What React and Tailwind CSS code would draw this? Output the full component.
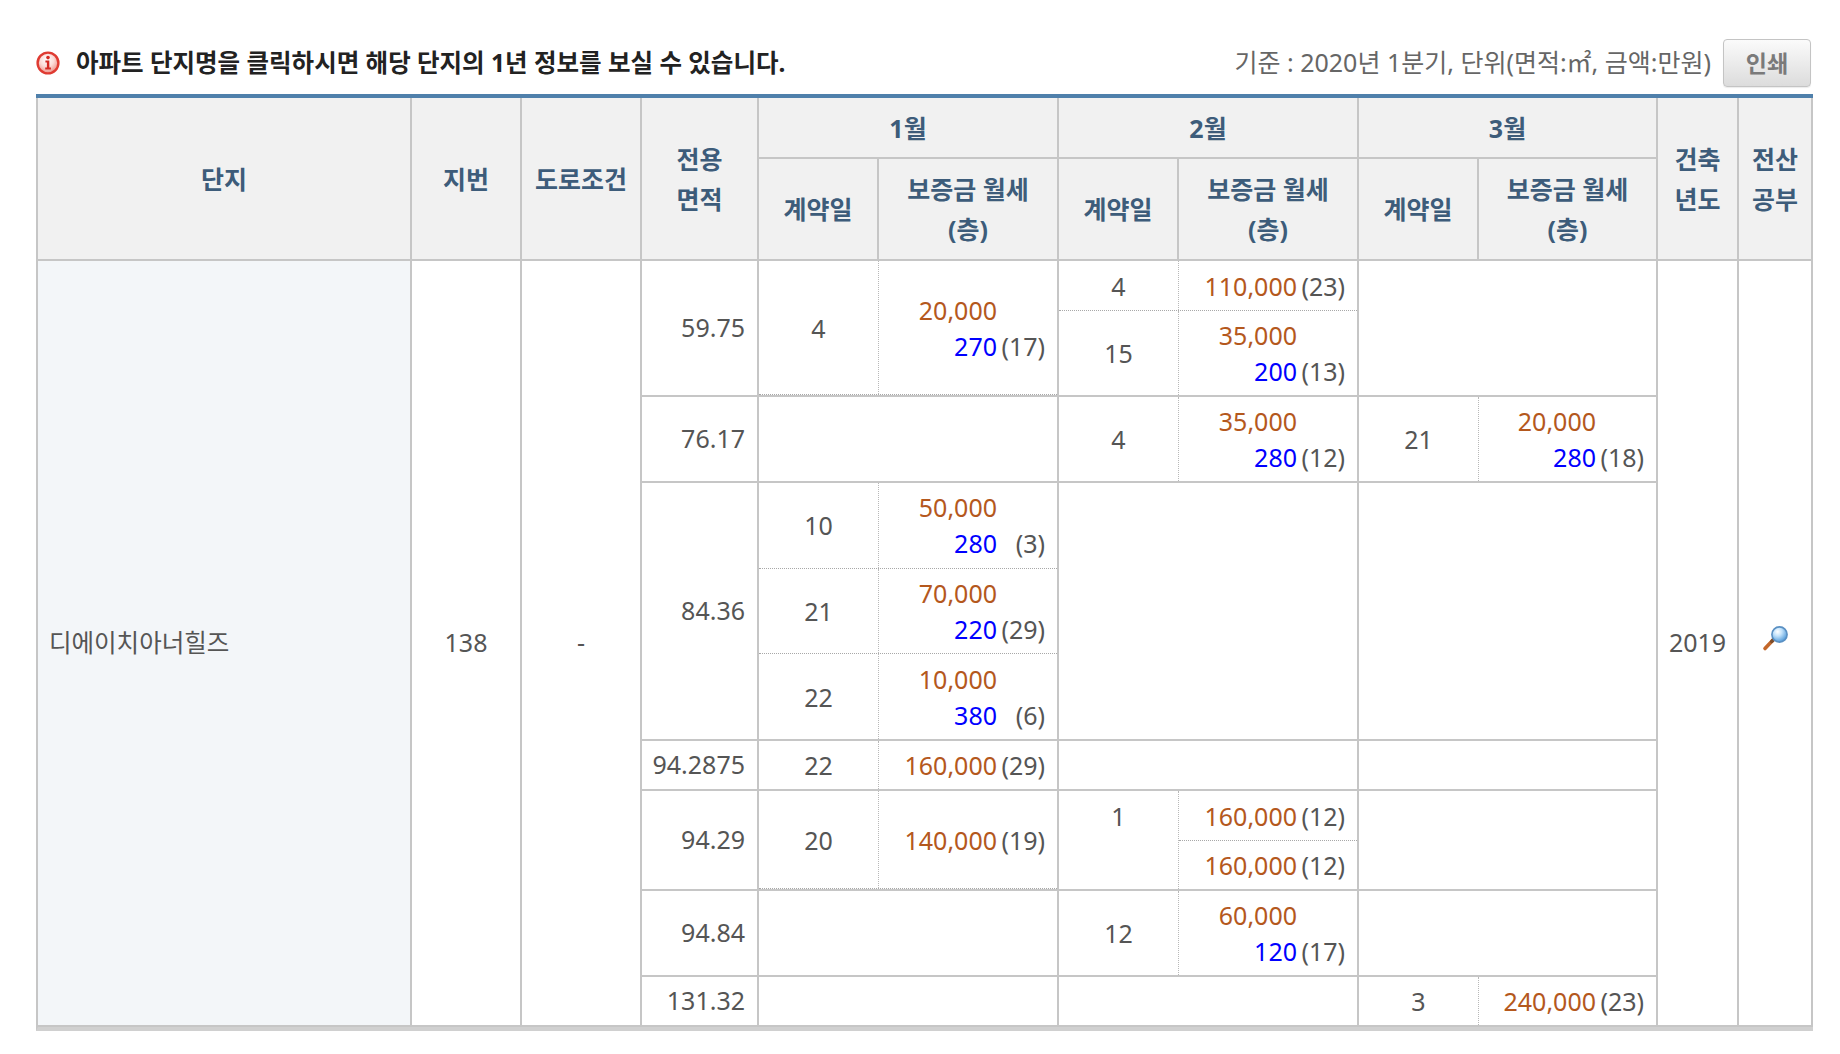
import React from "react";

const C = "border-r-2 border-b-2 border-[#c6c6c6]";

function Money({ dep, rent, floor }) {
  return (
    <div className="grid grid-cols-[auto_48px] leading-[36px] whitespace-nowrap">
      <div className="text-right text-[#b4581d]">{dep}</div>
      <div className="text-right">{rent ? "" : floor}</div>
      {rent && (
        <>
          <div className="text-right text-[#0000ff]">{rent}</div>
          <div className="text-right">{floor}</div>
        </>
      )}
    </div>
  );
}

function Sub({ cls, day, dep, rent, floor }) {
  return (
    <div className={"flex " + cls}>
      <div className="w-[120px] shrink-0 border-r border-dotted border-[#b8b8b8] flex items-center justify-center leading-[36px]">
        {day}
      </div>
      <div className="flex-1 flex items-center justify-end pr-[12px]">
        <Money dep={dep} rent={rent} floor={floor} />
      </div>
    </div>
  );
}

function Block({ pos, children }) {
  return <div className={pos + " " + C + " flex flex-col"}>{children}</div>;
}

function H({ pos, children }) {
  return (
    <div
      className={
        pos +
        " " +
        C +
        " bg-[#f1f1f1] flex items-center justify-center text-center font-bold text-[#3d5c7a] text-[25px] leading-[40px]"
      }
    >
      <div>{children}</div>
    </div>
  );
}

function Area({ pos, children }) {
  return (
    <div className={pos + " " + C + " flex items-center justify-end pr-[12px]"}>
      {children}
    </div>
  );
}

function InfoIcon() {
  return (
    <svg width="24" height="24" viewBox="0 0 24 24">
      <defs>
        <radialGradient id="infog" cx="45%" cy="35%" r="65%">
          <stop offset="0" stopColor="#ffffff" />
          <stop offset="0.5" stopColor="#fcdcd8" />
          <stop offset="1" stopColor="#ec8f86" />
        </radialGradient>
      </defs>
      <circle cx="12" cy="12" r="10.4" fill="url(#infog)" stroke="#df3b32" strokeWidth="2.4" />
      <circle cx="12" cy="6.6" r="1.8" fill="#d42a23" />
      <path d="M9.4 9.5h3.9v6.9h1.6v2H9.2v-2h1.7v-4.9H9.4z" fill="#d42a23" />
    </svg>
  );
}

function Magnifier() {
  return (
    <svg width="28" height="26" viewBox="0 0 28 26">
      <defs>
        <radialGradient id="lensg" cx="38%" cy="32%" r="70%">
          <stop offset="0" stopColor="#ffffff" />
          <stop offset="0.4" stopColor="#c2e2fb" />
          <stop offset="1" stopColor="#4f98d8" />
        </radialGradient>
      </defs>
      <line x1="13" y1="13" x2="4" y2="22.5" stroke="#c3672a" strokeWidth="3.6" strokeLinecap="round" />
      <line x1="13" y1="13" x2="10.8" y2="15.4" stroke="#7a4c2c" strokeWidth="3.6" strokeLinecap="round" />
      <circle cx="18.5" cy="8.5" r="7.6" fill="url(#lensg)" stroke="#5a90c3" strokeWidth="1.6" />
    </svg>
  );
}

export default function App() {
  return (
    <div className="w-[1840px] h-[1054px] bg-white font-['Noto_Sans','Noto_Sans_CJK_KR',sans-serif]">
      <div className="ml-[36px] w-[1777px] pt-[39px]">
        <div className="h-[48px] flex items-center justify-between pr-[2px]">
          <div className="flex items-center">
            <div className="flex">
              <InfoIcon />
            </div>
            <div className="ml-[16px] text-[24.5px] font-bold text-[#222]">
              아파트 단지명을 클릭하시면 해당 단지의 1년 정보를 보실 수 있습니다.
            </div>
          </div>
          <div className="flex items-center">
            <div className="text-[25px] text-[#666]">기준 : 2020년 1분기, 단위(면적:㎡, 금액:만원)</div>
            <div className="ml-[12px] w-[88px] h-[48px] rounded-[4px] border border-[#c4c4c4] bg-linear-to-b from-[#fbfbfb] to-[#dcdcdc] flex items-center justify-center text-[23px] font-bold text-[#7a7a7a] shadow-[0_1px_1px_rgba(0,0,0,0.08)]">
              인쇄
            </div>
          </div>
        </div>

        <div className="mt-[7px] border-t-4 border-[#4f80ab]">
          <div className="border-l-2 border-[#c6c6c6] border-b-[4px] border-b-[#d0d0d0]">
            <div className="grid grid-cols-[374px_110px_120px_117px_120px_180px_120px_180px_120px_179px_81px_74px] grid-rows-[61px_102px_50px_86px_86px_86px_86px_86px_50px_50px_50px_86px_50px] text-[25px] text-[#555]">
              {/* header */}
              <H pos="col-[1/2] row-[1/3]">단지</H>
              <H pos="col-[2/3] row-[1/3]">지번</H>
              <H pos="col-[3/4] row-[1/3]">도로조건</H>
              <H pos="col-[4/5] row-[1/3]">
                전용
                <br />
                면적
              </H>
              <H pos="col-[5/7] row-[1/2]">1월</H>
              <H pos="col-[7/9] row-[1/2]">2월</H>
              <H pos="col-[9/11] row-[1/2]">3월</H>
              <H pos="col-[11/12] row-[1/3]">
                건축
                <br />
                년도
              </H>
              <H pos="col-[12/13] row-[1/3]">
                전산
                <br />
                공부
              </H>
              <H pos="col-[5/6] row-[2/3]">계약일</H>
              <H pos="col-[6/7] row-[2/3]">
                보증금 월세
                <br />
                (층)
              </H>
              <H pos="col-[7/8] row-[2/3]">계약일</H>
              <H pos="col-[8/9] row-[2/3]">
                보증금 월세
                <br />
                (층)
              </H>
              <H pos="col-[9/10] row-[2/3]">계약일</H>
              <H pos="col-[10/11] row-[2/3]">
                보증금 월세
                <br />
                (층)
              </H>

              {/* spanning columns */}
              <div className={"col-[1/2] row-[3/14] bg-[#f3f6f9] flex items-center pl-[11px] text-[24.5px] " + C}>
                디에이치아너힐즈
              </div>
              <div className={"col-[2/3] row-[3/14] flex items-center justify-center " + C}>138</div>
              <div className={"col-[3/4] row-[3/14] flex items-center justify-center " + C}>-</div>
              <div className={"col-[11/12] row-[3/14] flex items-center justify-center " + C}>2019</div>
              <div className={"col-[12/13] row-[3/14] flex items-center justify-center pb-[8px] " + C}>
                <Magnifier />
              </div>

              {/* area column */}
              <Area pos="col-[4/5] row-[3/5]">59.75</Area>
              <Area pos="col-[4/5] row-[5/6]">76.17</Area>
              <Area pos="col-[4/5] row-[6/9]">84.36</Area>
              <Area pos="col-[4/5] row-[9/10]">94.2875</Area>
              <Area pos="col-[4/5] row-[10/12]">94.29</Area>
              <Area pos="col-[4/5] row-[12/13]">94.84</Area>
              <Area pos="col-[4/5] row-[13/14]">131.32</Area>

              {/* January */}
              <Block pos="col-[5/7] row-[3/5]">
                <Sub cls="flex-1 border-b border-dotted border-[#a8a8a8]" day="4" dep="20,000" rent="270" floor="(17)" />
              </Block>
              <Block pos="col-[5/7] row-[5/6]" />
              <Block pos="col-[5/7] row-[6/9]">
                <Sub cls="flex-1 border-b border-dotted border-[#a8a8a8]" day="10" dep="50,000" rent="280" floor="(3)" />
                <Sub cls="flex-1 border-b border-dotted border-[#a8a8a8]" day="21" dep="70,000" rent="220" floor="(29)" />
                <Sub cls="flex-1" day="22" dep="10,000" rent="380" floor="(6)" />
              </Block>
              <Block pos="col-[5/7] row-[9/10]">
                <Sub cls="flex-1" day="22" dep="160,000" floor="(29)" />
              </Block>
              <Block pos="col-[5/7] row-[10/12]">
                <Sub cls="flex-1 border-b border-dotted border-[#a8a8a8]" day="20" dep="140,000" floor="(19)" />
              </Block>
              <Block pos="col-[5/7] row-[12/13]" />
              <Block pos="col-[5/7] row-[13/14]" />

              {/* February */}
              <Block pos="col-[7/9] row-[3/5]">
                <Sub cls="h-[50px] border-b border-dotted border-[#a8a8a8]" day="4" dep="110,000" floor="(23)" />
                <Sub cls="flex-1" day="15" dep="35,000" rent="200" floor="(13)" />
              </Block>
              <Block pos="col-[7/9] row-[5/6]">
                <Sub cls="flex-1" day="4" dep="35,000" rent="280" floor="(12)" />
              </Block>
              <Block pos="col-[7/9] row-[6/9]" />
              <Block pos="col-[7/9] row-[9/10]" />
              <div className={"col-[7/9] row-[10/12] flex " + C}>
                <div className="w-[120px] shrink-0 border-r border-dotted border-[#b8b8b8] flex justify-center">
                  <div className="h-[50px] flex items-center leading-[36px]">1</div>
                </div>
                <div className="flex-1 flex flex-col">
                  <div className="h-[50px] border-b border-dotted border-[#a8a8a8] flex items-center justify-end pr-[12px]">
                    <Money dep="160,000" floor="(12)" />
                  </div>
                  <div className="flex-1 flex items-center justify-end pr-[12px]">
                    <Money dep="160,000" floor="(12)" />
                  </div>
                </div>
              </div>
              <Block pos="col-[7/9] row-[12/13]">
                <Sub cls="flex-1" day="12" dep="60,000" rent="120" floor="(17)" />
              </Block>
              <Block pos="col-[7/9] row-[13/14]" />

              {/* March */}
              <Block pos="col-[9/11] row-[3/5]" />
              <Block pos="col-[9/11] row-[5/6]">
                <Sub cls="flex-1" day="21" dep="20,000" rent="280" floor="(18)" />
              </Block>
              <Block pos="col-[9/11] row-[6/9]" />
              <Block pos="col-[9/11] row-[9/10]" />
              <Block pos="col-[9/11] row-[10/12]" />
              <Block pos="col-[9/11] row-[12/13]" />
              <Block pos="col-[9/11] row-[13/14]">
                <Sub cls="flex-1" day="3" dep="240,000" floor="(23)" />
              </Block>
            </div>
          </div>
        </div>
      </div>
    </div>
  );
}
